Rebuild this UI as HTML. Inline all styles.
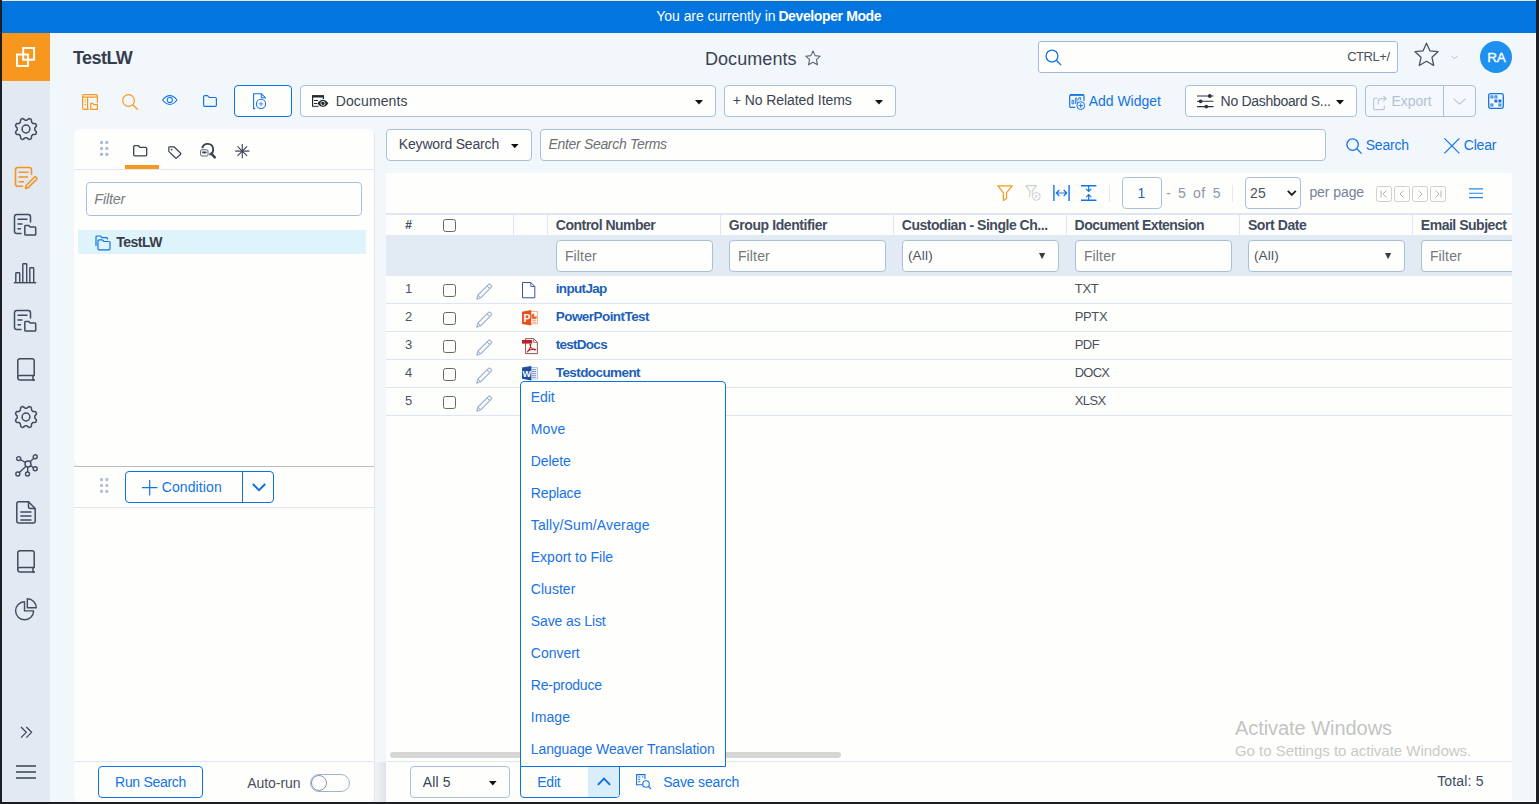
<!DOCTYPE html>
<html lang="en"><head><meta charset="utf-8"><title>Documents - TestLW</title>
<style>
html,body{margin:0;padding:0}
body{width:1539px;height:804px;position:relative;overflow:hidden;background:#1d1e24;font-family:"Liberation Sans",sans-serif}
.b{position:absolute;box-sizing:border-box}
.t{position:absolute;white-space:nowrap;line-height:1;display:block}
svg{overflow:visible}
</style></head><body>
<div class="b" style="left:2px;top:0px;width:1534px;height:1px;background:#efe8dc;"></div>
<div class="b" style="left:2px;top:1px;width:1534px;height:32px;background:#0275de;"></div>
<div class="b" style="left:2px;top:33px;width:48px;height:769px;background:#e2e9f3;"></div>
<div class="b" style="left:50px;top:33px;width:1486px;height:769px;background:#f2f7fb;"></div>
<div class="b" style="left:2px;top:33px;width:48px;height:48px;background:#f8971d;"></div>
<div class="b" style="left:1535px;top:33px;width:1px;height:769px;background:rgba(255,255,255,0.85);"></div>
<div class="b" style="left:1512px;top:801px;width:24px;height:1px;background:rgba(255,255,255,0.9);"></div>
<span class="t" id="banner" style="left:656.30px;top:9.25px;font-size:14px;color:#fff;letter-spacing:-0.046px;">You are currently in</span>
<span class="t" id="banner2" style="left:778.40px;top:9.25px;font-size:14px;color:#fff;letter-spacing:-0.382px;font-weight:700;">Developer Mode</span>
<svg style="position:absolute;left:16px;top:47px" width="22" height="22" viewBox="0 0 22 22" fill="none" ><rect x="7.2" y="1" width="10.9" height="11.7" stroke="#fff" stroke-width="2"/><rect x="1" y="7.5" width="11" height="11.5" stroke="#fff" stroke-width="2"/></svg>
<svg style="position:absolute;left:13.5px;top:116.6px" width="24" height="24" viewBox="0 0 24 24" fill="none" ><path d="M12.0 3.2L12.9 3.2L13.9 2.3L15.2 1.5L16.2 1.8L17.2 2.3L17.5 3.8L17.6 5.2L18.2 5.8L18.8 6.4L20.2 6.5L21.7 6.8L22.2 7.8L22.5 8.8L21.7 10.1L20.8 11.1L20.8 12.0L20.8 12.9L21.7 13.9L22.5 15.2L22.2 16.2L21.7 17.2L20.2 17.5L18.8 17.6L18.2 18.2L17.6 18.8L17.5 20.2L17.2 21.7L16.2 22.2L15.2 22.5L13.9 21.7L12.9 20.8L12.0 20.8L11.1 20.8L10.1 21.7L8.8 22.5L7.8 22.2L6.8 21.7L6.5 20.2L6.4 18.8L5.8 18.2L5.2 17.6L3.8 17.5L2.3 17.2L1.8 16.2L1.5 15.2L2.3 13.9L3.2 12.9L3.2 12.0L3.2 11.1L2.3 10.1L1.5 8.8L1.8 7.8L2.3 6.8L3.8 6.5L5.2 6.4L5.8 5.8L6.4 5.2L6.5 3.8L6.8 2.3L7.8 1.8L8.8 1.5L10.1 2.3L11.1 3.2Z" stroke="#414b5c" stroke-width="1.5" stroke-linejoin="round"/><circle cx="12" cy="12" r="3.9" stroke="#414b5c" stroke-width="1.5"/></svg>
<svg style="position:absolute;left:13.5px;top:165.5px" width="24" height="24" viewBox="0 0 24 24" fill="none" ><path d="M8.5 20.3H3.8Q1.5 20.3 1.5 18V3.8Q1.5 1.5 3.8 1.5H15.2Q17.5 1.5 17.5 3.8V8.5" stroke="#f7931e" stroke-width="1.6" stroke-linecap="round"/><path d="M4.5 6.3H14.5M4.5 11H14M4.5 15.7H10" stroke="#f7931e" stroke-width="1.6"/><path d="M11.5 22.5L12.4 19.2L20.3 11.3Q21.2 10.4 22.3 11.5Q23.4 12.6 22.5 13.5L14.6 21.4Z" stroke="#f7931e" stroke-width="1.6" stroke-linejoin="round"/></svg>
<svg style="position:absolute;left:13px;top:212.5px" width="24" height="24" viewBox="0 0 24 24" fill="none" ><path d="M8 20.5H3.8Q1.5 20.5 1.5 18.2V3.8Q1.5 1.5 3.8 1.5H15.2Q17.5 1.5 17.5 3.8V9" stroke="#414b5c" stroke-width="1.5" stroke-linecap="round"/><path d="M4.5 6.3H14.5M4.5 11H9.5M4.5 15.7H8" stroke="#414b5c" stroke-width="1.5"/><path d="M11.8 21.3V13.2Q11.8 12.4 12.6 12.4H15.6L17.2 14H21.9Q22.7 14 22.7 14.8V21.3Q22.7 22.1 21.9 22.1H12.6Q11.8 22.1 11.8 21.3Z" stroke="#414b5c" stroke-width="1.5" stroke-linejoin="round"/></svg>
<svg style="position:absolute;left:13px;top:261.5px" width="24" height="22" viewBox="0 0 24 22" fill="none" ><path d="M0.8 20.7H23.2" stroke="#414b5c" stroke-width="1.4"/><path d="M2.8 20.5V11.5Q2.8 10.8 3.5 10.8H6Q6.7 10.8 6.7 11.5V20.5M9.8 20.5V2.5Q9.8 1.8 10.5 1.8H13Q13.7 1.8 13.7 2.5V20.5M16.8 20.5V6.5Q16.8 5.8 17.5 5.8H20Q20.7 5.8 20.7 6.5V20.5" stroke="#414b5c" stroke-width="1.4"/></svg>
<svg style="position:absolute;left:13px;top:308.5px" width="24" height="24" viewBox="0 0 24 24" fill="none" ><path d="M8 20.5H3.8Q1.5 20.5 1.5 18.2V3.8Q1.5 1.5 3.8 1.5H15.2Q17.5 1.5 17.5 3.8V9" stroke="#414b5c" stroke-width="1.5" stroke-linecap="round"/><path d="M4.5 6.3H14.5M4.5 11H9.5M4.5 15.7H8" stroke="#414b5c" stroke-width="1.5"/><path d="M11.8 21.3V13.2Q11.8 12.4 12.6 12.4H15.6L17.2 14H21.9Q22.7 14 22.7 14.8V21.3Q22.7 22.1 21.9 22.1H12.6Q11.8 22.1 11.8 21.3Z" stroke="#414b5c" stroke-width="1.5" stroke-linejoin="round"/></svg>
<svg style="position:absolute;left:16.5px;top:357.5px" width="19" height="23" viewBox="0 0 19 23" fill="none" ><path d="M17 22H3.2Q0.8 22 0.8 19.7V3Q0.8 0.8 3 0.8H15Q17.2 0.8 17.2 3V17.5H3Q0.8 17.5 0.8 19.7" stroke="#414b5c" stroke-width="1.5" stroke-linejoin="round"/><path d="M16 17.5V22H18" stroke="#414b5c" stroke-width="1.5"/></svg>
<svg style="position:absolute;left:13.5px;top:404.5px" width="24" height="24" viewBox="0 0 24 24" fill="none" ><path d="M12.0 3.2L12.9 3.2L13.9 2.3L15.2 1.5L16.2 1.8L17.2 2.3L17.5 3.8L17.6 5.2L18.2 5.8L18.8 6.4L20.2 6.5L21.7 6.8L22.2 7.8L22.5 8.8L21.7 10.1L20.8 11.1L20.8 12.0L20.8 12.9L21.7 13.9L22.5 15.2L22.2 16.2L21.7 17.2L20.2 17.5L18.8 17.6L18.2 18.2L17.6 18.8L17.5 20.2L17.2 21.7L16.2 22.2L15.2 22.5L13.9 21.7L12.9 20.8L12.0 20.8L11.1 20.8L10.1 21.7L8.8 22.5L7.8 22.2L6.8 21.7L6.5 20.2L6.4 18.8L5.8 18.2L5.2 17.6L3.8 17.5L2.3 17.2L1.8 16.2L1.5 15.2L2.3 13.9L3.2 12.9L3.2 12.0L3.2 11.1L2.3 10.1L1.5 8.8L1.8 7.8L2.3 6.8L3.8 6.5L5.2 6.4L5.8 5.8L6.4 5.2L6.5 3.8L6.8 2.3L7.8 1.8L8.8 1.5L10.1 2.3L11.1 3.2Z" stroke="#414b5c" stroke-width="1.5" stroke-linejoin="round"/><circle cx="12" cy="12" r="3.9" stroke="#414b5c" stroke-width="1.5"/></svg>
<svg style="position:absolute;left:14.5px;top:453.5px" width="24" height="24" viewBox="0 0 24 24" fill="none" ><circle cx="13" cy="10" r="3" stroke="#414b5c" stroke-width="1.4"/><circle cx="3.7" cy="4.6" r="2" stroke="#414b5c" stroke-width="1.4"/><circle cx="20.2" cy="2.8" r="2" stroke="#414b5c" stroke-width="1.4"/><circle cx="20.2" cy="14.8" r="2" stroke="#414b5c" stroke-width="1.4"/><circle cx="12.5" cy="20" r="2" stroke="#414b5c" stroke-width="1.4"/><circle cx="2.8" cy="20" r="2" stroke="#414b5c" stroke-width="1.4"/><path d="M5.4 5.7L10.4 8.5M18.9 4.3L15 7.8M18.4 13.8L15.7 11.6M12.7 18V13M4.3 18.6L11 12.2" stroke="#414b5c" stroke-width="1.4"/></svg>
<svg style="position:absolute;left:15.5px;top:501px" width="20" height="23" viewBox="0 0 20 23" fill="none" ><path d="M2.8 0.8H12.5L19.2 7.5V20Q19.2 22 17.2 22H2.8Q0.8 22 0.8 20V2.8Q0.8 0.8 2.8 0.8Z" stroke="#414b5c" stroke-width="1.5" stroke-linejoin="round"/><path d="M12.5 0.8V5.5Q12.5 7.5 14.5 7.5H19.2" stroke="#414b5c" stroke-width="1.5"/><path d="M4.3 11H15.5M4.3 15H15.5M4.3 19H15.5" stroke="#414b5c" stroke-width="1.3"/></svg>
<svg style="position:absolute;left:16.5px;top:549.5px" width="19" height="23" viewBox="0 0 19 23" fill="none" ><path d="M17 22H3.2Q0.8 22 0.8 19.7V3Q0.8 0.8 3 0.8H15Q17.2 0.8 17.2 3V17.5H3Q0.8 17.5 0.8 19.7" stroke="#414b5c" stroke-width="1.5" stroke-linejoin="round"/><path d="M16 17.5V22H18" stroke="#414b5c" stroke-width="1.5"/></svg>
<svg style="position:absolute;left:14.5px;top:598px" width="22" height="22.5" viewBox="0 0 22 22.5" fill="none" ><path d="M9.5 3.8A9 9 0 1 0 18.6 12.9H9.5Z" stroke="#414b5c" stroke-width="1.4" stroke-linejoin="round"/><path d="M12.3 0.8A9 9 0 0 1 21.3 9.8H12.3Z" stroke="#414b5c" stroke-width="1.4" stroke-linejoin="round"/></svg>
<svg style="position:absolute;left:20.3px;top:725.6px" width="13" height="13" viewBox="0 0 13 13" fill="none" ><path d="M1 1L6.3 6.3L1 11.6M6.3 1L11.6 6.3L6.3 11.6" stroke="#3a4354" stroke-width="1.2"/></svg>
<svg style="position:absolute;left:16px;top:765px" width="20" height="14" viewBox="0 0 20 14" fill="none" ><path d="M0 1H20M0 7H20M0 13H20" stroke="#3a4354" stroke-width="1.4"/></svg>
<span class="t" id="ws" style="left:72.90px;top:48.66px;font-size:18px;color:#363d4c;letter-spacing:-0.545px;font-weight:700;">TestLW</span>
<span class="t" id="title" style="left:704.90px;top:49.76px;font-size:18px;color:#3a4354;letter-spacing:0.084px;">Documents</span>
<svg style="position:absolute;left:804.5px;top:50px" width="16" height="16" viewBox="0 0 16 16" fill="none" ><path d="M8 0.9L10.1 5.6L15.2 6.2L11.4 9.7L12.5 14.8L8 12.2L3.5 14.8L4.6 9.7L0.8 6.2L5.9 5.6Z" stroke="#5a6475" stroke-width="1.1" stroke-linejoin="round"/></svg>
<div class="b" style="left:1038px;top:41px;width:360px;height:32px;background:#fefffd;border:1px solid #a3b8d6;border-radius:3px;"></div>
<svg style="position:absolute;left:1045px;top:49px" width="17" height="17" viewBox="0 0 17 17" fill="none" ><circle cx="7" cy="7" r="5.9" stroke="#1273e4" stroke-width="1.3"/><path d="M11.3 11.3L16 16" stroke="#1273e4" stroke-width="1.3"/></svg>
<span class="t" id="ctrl" style="left:1347.20px;top:50.20px;font-size:13px;color:#4a4f5c;letter-spacing:-0.459px;">CTRL+/</span>
<svg style="position:absolute;left:1414px;top:42px" width="25" height="25" viewBox="0 0 25 25" fill="none" ><path d="M12.5 1.2L15.9 8.8L24 9.7L18 15.3L19.7 23.5L12.5 19.3L5.3 23.5L7 15.3L1 9.7L9.1 8.8Z" stroke="#4a5262" stroke-width="1.3" stroke-linejoin="round"/></svg>
<svg style="position:absolute;left:1451px;top:55px" width="7" height="5" viewBox="0 0 7 5" fill="none" ><path d="M0.5 0.8L3.5 3.8L6.5 0.8" stroke="#b4bccb" stroke-width="1"/></svg>
<div class="b" style="left:1480px;top:41px;width:32px;height:32px;background:#1e90f0;border-radius:16px;"></div>
<span class="t" id="ra" style="left:1487.20px;top:50.87px;font-size:13.5px;color:#fff;letter-spacing:-0.277px;-webkit-text-stroke:0.35px #fff;">RA</span>
<svg style="position:absolute;left:82px;top:94px" width="16" height="16" viewBox="0 0 16 16" fill="none" ><path d="M15.4 8.9V2.1Q15.4 0.6 13.9 0.6H2.1Q0.6 0.6 0.6 2.1V13.9Q0.6 15.4 2.1 15.4H6.8" stroke="#f8971d" stroke-width="1.2"/><path d="M0.6 3.1H15.4M5.6 3.1V15.4" stroke="#f8971d" stroke-width="1.2"/><path d="M3.2 5.2V12.4" stroke="#f8971d" stroke-width="1.1" stroke-dasharray="1.2 1.2"/><path d="M8.7 15.4V9.4H10.8L11.9 10.6H15.4V15.4Z" stroke="#f8971d" stroke-width="1.2" stroke-linejoin="round"/></svg>
<svg style="position:absolute;left:121.8px;top:94.2px" width="17" height="17" viewBox="0 0 17 17" fill="none" ><circle cx="6.55" cy="6.55" r="5.85" stroke="#f8971d" stroke-width="1.2"/><path d="M10.8 10.8L15.9 15.7" stroke="#f8971d" stroke-width="1.2"/></svg>
<svg style="position:absolute;left:161.8px;top:94.7px" width="16" height="11" viewBox="0 0 16 11" fill="none" ><path d="M0.6 5Q4 0.6 7.8 0.6Q11.6 0.6 15 5Q11.6 9.4 7.8 9.4Q4 9.4 0.6 5Z" stroke="#1273e4" stroke-width="1.05" stroke-linejoin="round"/><circle cx="7.8" cy="5" r="2.6" stroke="#1273e4" stroke-width="1.05"/></svg>
<svg style="position:absolute;left:203px;top:95px" width="14" height="12" viewBox="0 0 14 12" fill="none" ><path d="M0.6 10.2V1.8Q0.6 0.6 1.8 0.6H4.6L6.2 2.5H12.2Q13.4 2.5 13.4 3.7V10.2Q13.4 11.4 12.2 11.4H1.8Q0.6 11.4 0.6 10.2Z" stroke="#1273e4" stroke-width="1.15" stroke-linejoin="round"/></svg>
<div class="b" style="left:234px;top:85px;width:58px;height:32px;background:#fefffd;border:1px solid #0b73e0;border-radius:4px;"></div>
<svg style="position:absolute;left:253px;top:93px" width="14" height="17" viewBox="0 0 14 17" fill="none" ><path d="M2.2 15.6H0.6V0.7H8.3L12.7 4.9" stroke="#1273e4" stroke-width="1.1"/><path d="M8.3 0.7V4.9H12.7" stroke="#1273e4" stroke-width="1"/><circle cx="8" cy="10.9" r="4.6" stroke="#1273e4" stroke-width="1.1"/><path d="M8 8.6V13.2M5.7 10.9H10.3" stroke="#1273e4" stroke-width="0.9" opacity="0.8"/></svg>
<div class="b" style="left:300px;top:85px;width:416px;height:32px;background:#fefffd;border:1px solid #a9c0dc;border-radius:4px;"></div>
<svg style="position:absolute;left:312px;top:95px" width="17" height="13" viewBox="0 0 17 13" fill="none" ><path d="M0 1.3H12" stroke="#22262e" stroke-width="2.4"/><path d="M0.6 1V11.6M11.4 1V4" stroke="#22262e" stroke-width="1.2"/><path d="M0 11.4H6.5" stroke="#55585f" stroke-width="1.4"/><path d="M2 5.5H6M2 8.5H5" stroke="#22262e" stroke-width="1"/><path d="M5.4 8.4Q8 4.8 10.9 4.8Q13.8 4.8 16.4 8.4Q13.8 12 10.9 12Q8 12 5.4 8.4Z" fill="#22262e"/><circle cx="10.9" cy="8.4" r="2.1" stroke="#fff" stroke-width="0.8" fill="#22262e"/></svg>
<span class="t" id="dd1" style="left:335.70px;top:93.85px;font-size:14px;color:#3a4354;letter-spacing:0.132px;">Documents</span>
<svg style="position:absolute;left:695px;top:99.8px" width="8" height="5" viewBox="0 0 8 5" fill="none" ><path d="M0 0H8L4 4.6Z" fill="#111"/></svg>
<div class="b" style="left:724px;top:85px;width:172px;height:32px;background:#fefffd;border:1px solid #a9c0dc;border-radius:4px;"></div>
<span class="t" id="rel" style="left:732.70px;top:93.15px;font-size:14px;color:#3a4354;letter-spacing:-0.063px;">+ No Related Items</span>
<svg style="position:absolute;left:875px;top:99.8px" width="8" height="5" viewBox="0 0 8 5" fill="none" ><path d="M0 0H8L4 4.6Z" fill="#111"/></svg>
<svg style="position:absolute;left:1068.5px;top:94px" width="17" height="17" viewBox="0 0 17 17" fill="none" ><path d="M6.2 13.4H1.8Q0.7 13.4 0.7 12.3V1.9Q0.7 0.8 1.8 0.8H13.9Q15 0.8 15 1.9V7" stroke="#1273e4" stroke-width="1.2"/><path d="M1 0.9H14.7" stroke="#1273e4" stroke-width="1.6"/><path d="M3 9.8V6.4H4.6V9.8ZM6.4 9.8V4.2H8V9.8" stroke="#1273e4" stroke-width="0.85"/><path d="M9.8 6.4V3.6H11.6V6.2" stroke="#1273e4" stroke-width="0.85"/><circle cx="11.8" cy="11.6" r="3.9" fill="#f2f7fb" stroke="#1273e4" stroke-width="1"/><path d="M11.8 9.3V13.9M9.5 11.6H14.1" stroke="#1273e4" stroke-width="1"/></svg>
<span class="t" id="addw" style="left:1088.80px;top:94.15px;font-size:14px;color:#1273e4;letter-spacing:-0.038px;">Add Widget</span>
<div class="b" style="left:1185px;top:85px;width:172px;height:32px;background:#fefffd;border:1px solid #a9c0dc;border-radius:4px;"></div>
<svg style="position:absolute;left:1197px;top:94px" width="17" height="15" viewBox="0 0 17 15" fill="none" ><path d="M0 2H16.5M0 7.3H16.5M0 12.6H16.5" stroke="#2d3340" stroke-width="1.1"/><circle cx="12.8" cy="2" r="1.9" fill="#2d3340"/><circle cx="3.6" cy="7.3" r="1.9" fill="#2d3340"/><circle cx="9.3" cy="12.6" r="1.9" fill="#2d3340"/></svg>
<span class="t" id="dash" style="left:1220.60px;top:94.15px;font-size:14px;color:#3a4354;letter-spacing:-0.305px;">No Dashboard S...</span>
<svg style="position:absolute;left:1336px;top:99.8px" width="8" height="5" viewBox="0 0 8 5" fill="none" ><path d="M0 0H8L4 4.6Z" fill="#111"/></svg>
<div class="b" style="left:1365px;top:85px;width:111px;height:32px;background:#f5f8fc;border:1px solid #a9c0dc;border-radius:4px;"></div>
<div class="b" style="left:1443px;top:85px;width:1px;height:32px;background:#a9c0dc;"></div>
<svg style="position:absolute;left:1372.5px;top:94.5px" width="14" height="15.5" viewBox="0 0 14 15.5" fill="none" ><path d="M5 3.2H1.7Q0.7 3.2 0.7 4.2V13.6Q0.7 14.6 1.7 14.6H10.3Q11.3 14.6 11.3 13.6V10.5" stroke="#b9c6dc" stroke-width="1.1"/><path d="M5.2 9.5V7.3Q5.2 3.6 9 3.6H13" stroke="#b9c6dc" stroke-width="1.1"/><path d="M10.3 0.8L13.2 3.6L10.3 6.4" stroke="#b9c6dc" stroke-width="1.1"/></svg>
<span class="t" id="exp" style="left:1391.40px;top:94.15px;font-size:14px;color:#b4c1d8;letter-spacing:-0.027px;">Export</span>
<svg style="position:absolute;left:1453px;top:98px" width="13" height="7" viewBox="0 0 13 7" fill="none" ><path d="M0.5 0.6L6.5 6.2L12.5 0.6" stroke="#b9c6dc" stroke-width="1.1"/></svg>
<svg style="position:absolute;left:1488px;top:93px" width="16" height="16" viewBox="0 0 16 16" fill="none" ><rect x="0.7" y="0.7" width="14.6" height="14.6" rx="1.8" stroke="#1273e4" stroke-width="1.3"/><rect x="2.9" y="2.9" width="2" height="2" stroke="#1273e4" stroke-width="0.9"/><rect x="6.9" y="2.9" width="2" height="2" stroke="#1273e4" stroke-width="0.9"/><rect x="6.9" y="7" width="2" height="2" fill="#1273e4" stroke="#1273e4" stroke-width="0.9"/><rect x="10.9" y="7" width="2" height="2" fill="#1273e4" stroke="#1273e4" stroke-width="0.9"/><rect x="2.9" y="11" width="2" height="2" stroke="#1273e4" stroke-width="0.9"/><rect x="10.9" y="11" width="2" height="2" stroke="#1273e4" stroke-width="0.9"/></svg>
<div class="b" style="left:74px;top:129px;width:300px;height:337px;background:#fefffd;border-radius:8px 8px 0 8px;"></div>
<div class="b" style="left:74px;top:466px;width:300px;height:1px;background:#bdbdbd;"></div>
<div class="b" style="left:74px;top:467px;width:300px;height:335px;background:#fefffd;border-radius:0 0 7px 7px;"></div>
<div class="b" style="left:74px;top:169px;width:300px;height:1px;background:#dfe6f2;"></div>
<div class="b" style="left:74px;top:507px;width:300px;height:1px;background:#dfe6f2;"></div>
<div class="b" style="left:74px;top:761px;width:300px;height:1px;background:#dfe6f2;"></div>
<div class="b" style="left:374px;top:133px;width:1px;height:669px;background:#e2e6eb;"></div>
<div class="b" style="left:375px;top:762px;width:11px;height:40px;background:linear-gradient(to right,#f0f4f8,#dde3ea);"></div>
<svg style="position:absolute;left:99.6px;top:141px" width="9" height="15" viewBox="0 0 9 15" fill="none" ><rect x="0" y="0" width="3.1" height="3.1" rx="1.1" fill="#a9bbd6"/><rect x="5.3" y="0" width="3.1" height="3.1" rx="1.1" fill="#a9bbd6"/><rect x="0" y="5.9" width="3.1" height="3.1" rx="1.1" fill="#a9bbd6"/><rect x="5.3" y="5.9" width="3.1" height="3.1" rx="1.1" fill="#a9bbd6"/><rect x="0" y="11.8" width="3.1" height="3.1" rx="1.1" fill="#a9bbd6"/><rect x="5.3" y="11.8" width="3.1" height="3.1" rx="1.1" fill="#a9bbd6"/></svg>
<svg style="position:absolute;left:132.5px;top:144.6px" width="15" height="12" viewBox="0 0 15 12" fill="none" ><path d="M0.7 9.8V1.8Q0.7 0.7 1.8 0.7H5.4L6.9 2.3H12.6Q13.7 2.3 13.7 3.4V9.8Q13.7 10.9 12.6 10.9H1.8Q0.7 10.9 0.7 9.8Z" stroke="#3b4250" stroke-width="1.3" stroke-linejoin="round"/></svg>
<svg style="position:absolute;left:168.2px;top:145.5px" width="14" height="13" viewBox="0 0 14 13" fill="none" ><path d="M0.8 1.5Q0.8 0.8 1.5 0.8H6L12.6 7.2Q13.1 7.8 12.6 8.3L8.6 12Q8 12.5 7.5 12L0.8 5.3Z" stroke="#3b4250" stroke-width="1.2" stroke-linejoin="round"/><circle cx="3.6" cy="3.6" r="0.9" fill="#3b4250"/></svg>
<svg style="position:absolute;left:200px;top:143px" width="16" height="15.5" viewBox="0 0 16 15.5" fill="none" ><path d="M2.3 5.2A5.5 5.5 0 1 1 9.3 11.6" stroke="#3b4250" stroke-width="1.9"/><path d="M11.3 10.6L14.8 14.3" stroke="#3b4250" stroke-width="2.5" stroke-linecap="round"/><rect x="0.6" y="6.8" width="7.4" height="6.2" rx="1.2" stroke="#5b6372" stroke-width="1"/><path d="M2.2 8.6H6.6V10.2H5L4.4 10.9L3.8 10.2H2.2Z" fill="#3b4250"/></svg>
<svg style="position:absolute;left:234.5px;top:144px" width="15" height="14.2" viewBox="0 0 15 14.2" fill="none" ><path d="M7.3 0V14.2" stroke="#3b4250" stroke-width="1.1"/><path d="M0.2 7.1H14.5" stroke="#6d7686" stroke-width="1.7"/><path d="M2.5 2.3L12.1 11.9M12.1 2.3L2.5 11.9" stroke="#3b4250" stroke-width="1.1"/></svg>
<div class="b" style="left:125px;top:165px;width:34px;height:4px;background:#f8971d;"></div>
<div class="b" style="left:86px;top:182px;width:276px;height:34px;background:#fefffd;border:1px solid #a9c0dc;border-radius:4px;"></div>
<span class="t" id="lf" style="left:94.30px;top:191.73px;font-size:14.5px;color:#7b7d80;letter-spacing:-0.220px;font-style:italic;">Filter</span>
<div class="b" style="left:78px;top:230px;width:288px;height:24px;background:#dff3fa;"></div>
<svg style="position:absolute;left:95px;top:235px" width="16" height="16" viewBox="0 0 16 16" fill="none" ><path d="M1 11V2Q1 1 2 1H5.5L7 2.6H11.5Q12.5 2.6 12.5 3.6V4.4" stroke="#1273e4" stroke-width="1.2"/><path d="M3 13.8V5.9Q3 4.9 4 4.9H7.4L8.9 6.5H14Q15 6.5 15 7.5V13.8Q15 14.8 14 14.8H4Q3 14.8 3 13.8Z" stroke="#1273e4" stroke-width="1.2" stroke-linejoin="round"/></svg>
<span class="t" id="tree" style="left:116.20px;top:235.05px;font-size:14px;color:#363d4c;letter-spacing:-0.508px;font-weight:700;">TestLW</span>
<svg style="position:absolute;left:99.8px;top:478px" width="9" height="15" viewBox="0 0 9 15" fill="none" ><rect x="0" y="0" width="3.1" height="3.1" rx="1.1" fill="#b4bfd3"/><rect x="5.3" y="0" width="3.1" height="3.1" rx="1.1" fill="#b4bfd3"/><rect x="0" y="5.9" width="3.1" height="3.1" rx="1.1" fill="#b4bfd3"/><rect x="5.3" y="5.9" width="3.1" height="3.1" rx="1.1" fill="#b4bfd3"/><rect x="0" y="11.8" width="3.1" height="3.1" rx="1.1" fill="#b4bfd3"/><rect x="5.3" y="11.8" width="3.1" height="3.1" rx="1.1" fill="#b4bfd3"/></svg>
<div class="b" style="left:125px;top:471px;width:149px;height:32px;background:#fefffd;border:1px solid #0b73e0;border-radius:4px;"></div>
<div class="b" style="left:242px;top:471px;width:1px;height:32px;background:#0b73e0;"></div>
<svg style="position:absolute;left:142px;top:480px" width="16" height="16" viewBox="0 0 16 16" fill="none" ><path d="M7.7 0V15.4M0 7.7H15.4" stroke="#1273e4" stroke-width="1.2"/></svg>
<span class="t" id="cond" style="left:161.70px;top:480.15px;font-size:14px;color:#1273e4;letter-spacing:0.116px;">Condition</span>
<svg style="position:absolute;left:252px;top:483px" width="14" height="9" viewBox="0 0 14 9" fill="none" ><path d="M0.8 1L7 7.2L13.2 1" stroke="#0b6fe0" stroke-width="1.9"/></svg>
<div class="b" style="left:98px;top:766px;width:105px;height:32px;background:#fefffd;border:1px solid #0b73e0;border-radius:4px;"></div>
<span class="t" id="run" style="left:115.10px;top:775.15px;font-size:14px;color:#1273e4;letter-spacing:-0.314px;">Run Search</span>
<span class="t" id="auto" style="left:247.20px;top:775.75px;font-size:14px;color:#4a4f5c;letter-spacing:-0.038px;">Auto-run</span>
<div class="b" style="left:310px;top:774px;width:40px;height:18px;background:#fefffd;border:1px solid #9db3d6;border-radius:9px;"></div>
<div class="b" style="left:311px;top:775px;width:16px;height:16px;background:#fefffd;border:1px solid #8d98ab;border-radius:8px;"></div>
<div class="b" style="left:386px;top:129px;width:146px;height:32px;background:#fefffd;border:1px solid #a9c0dc;border-radius:4px;"></div>
<span class="t" id="kw" style="left:398.80px;top:136.85px;font-size:14px;color:#3a4354;letter-spacing:-0.180px;">Keyword Search</span>
<svg style="position:absolute;left:511.3px;top:144.2px" width="7.6" height="4.4" viewBox="0 0 7.6 4.4" fill="none" ><path d="M0 0H7.6L3.8 4.2Z" fill="#111"/></svg>
<div class="b" style="left:540px;top:129px;width:786px;height:32px;background:#fefffd;border:1px solid #a9c0dc;border-radius:4px;"></div>
<span class="t" id="est" style="left:548.40px;top:136.85px;font-size:14px;color:#6e7074;letter-spacing:-0.310px;font-style:italic;">Enter Search Terms</span>
<svg style="position:absolute;left:1345.5px;top:137.8px" width="17" height="17" viewBox="0 0 17 17" fill="none" ><circle cx="6.6" cy="6.6" r="5.7" stroke="#1273e4" stroke-width="1.3"/><path d="M10.8 10.8L15.6 15.6" stroke="#1273e4" stroke-width="1.3"/></svg>
<span class="t" id="srch" style="left:1365.70px;top:138.15px;font-size:14px;color:#1273e4;letter-spacing:-0.194px;">Search</span>
<svg style="position:absolute;left:1444px;top:137.9px" width="16" height="16" viewBox="0 0 16 16" fill="none" ><path d="M0.4 0.4L15.4 15.4M15.4 0.4L0.4 15.4" stroke="#1273e4" stroke-width="1.2"/></svg>
<span class="t" id="clr" style="left:1463.70px;top:138.15px;font-size:14px;color:#1273e4;letter-spacing:-0.152px;">Clear</span>
<div class="b" style="left:386px;top:173px;width:1126px;height:629px;background:#fefffd;"></div>
<svg style="position:absolute;left:996.5px;top:184.5px" width="16" height="16.5" viewBox="0 0 16 16.5" fill="none" ><path d="M0.8 0.8H15.2L9.6 7.6V13.2L6.4 15.4V7.6Z" stroke="#f8971d" stroke-width="1.2" stroke-linejoin="round"/></svg>
<svg style="position:absolute;left:1025px;top:185px" width="16" height="16" viewBox="0 0 16 16" fill="none" ><path d="M0.6 0.6H11.4L7.2 5.8V9.2M4.8 12V5.8L0.6 0.6" stroke="#c9cdd3" stroke-width="1.1" stroke-linejoin="round"/><circle cx="11.3" cy="11.4" r="3.9" stroke="#c9cdd3" stroke-width="1"/><path d="M9.6 9.7L13 13.1M13 9.7L9.6 13.1" stroke="#c9cdd3" stroke-width="0.9"/></svg>
<svg style="position:absolute;left:1052.5px;top:185px" width="17" height="16" viewBox="0 0 17 16" fill="none" ><path d="M0.9 0V16M16.1 0V16" stroke="#1273e4" stroke-width="1.4"/><path d="M3.4 8H13.6M6.3 5L3.3 8L6.3 11M10.7 5L13.7 8L10.7 11" stroke="#1273e4" stroke-width="1.2"/></svg>
<svg style="position:absolute;left:1081px;top:185px" width="16" height="16" viewBox="0 0 16 16" fill="none" ><path d="M0 0.8H15.4M0 15.2H15.4" stroke="#1273e4" stroke-width="1.4"/><path d="M7.7 0.8V6.2M5.2 3.8L7.7 6.3L10.2 3.8M7.7 15.2V9.8M5.2 12.2L7.7 9.7L10.2 12.2" stroke="#1273e4" stroke-width="1.2"/></svg>
<div class="b" style="left:1109px;top:185px;width:1px;height:17px;background:#e3e8f1;"></div>
<div class="b" style="left:1122px;top:177px;width:40px;height:32px;background:#fefffd;border:1px solid #a9c0dc;border-radius:4px;"></div>
<span class="t" id="pg1" style="left:1137.60px;top:185.65px;font-size:14px;color:#2d5fb5;letter-spacing:-1.487px;">1</span>
<span class="t" style="left:1166.30px;top:185.65px;font-size:14px;color:#8b96ab;letter-spacing:-0.062px;">-</span>
<span class="t" style="left:1177.90px;top:185.65px;font-size:14px;color:#8b96ab;letter-spacing:0.213px;">5</span>
<span class="t" style="left:1192.90px;top:185.65px;font-size:14px;color:#8b96ab;letter-spacing:0.661px;">of</span>
<span class="t" id="of5" style="left:1212.70px;top:185.65px;font-size:14px;color:#8b96ab;letter-spacing:0.213px;">5</span>
<div class="b" style="left:1232px;top:185px;width:1px;height:17px;background:#e3e8f1;"></div>
<div class="b" style="left:1245px;top:177px;width:56px;height:32px;background:#fefffd;border:1px solid #a9c0dc;border-radius:4px;"></div>
<span class="t" id="n25" style="left:1250.10px;top:185.65px;font-size:14px;color:#4a5262;letter-spacing:0.063px;">25</span>
<svg style="position:absolute;left:1286.5px;top:189.5px" width="10" height="7" viewBox="0 0 10 7" fill="none" ><path d="M0.8 0.9L4.8 4.9L8.8 0.9" stroke="#222" stroke-width="1.9"/></svg>
<span class="t" id="pp" style="left:1309.40px;top:184.65px;font-size:14px;color:#76819a;letter-spacing:-0.072px;">per page</span>
<svg style="position:absolute;left:1376.3px;top:186px" width="16" height="16" viewBox="0 0 16 16" fill="none" ><rect x="0.5" y="0.5" width="15" height="15" rx="2" stroke="#d0d0cc" stroke-width="1"/><g stroke="#ababab" stroke-width="0.9"><path d="M5 4.5V11.5M10.5 4.5L7 8L10.5 11.5"/></g></svg>
<svg style="position:absolute;left:1394.3px;top:186px" width="16" height="16" viewBox="0 0 16 16" fill="none" ><rect x="0.5" y="0.5" width="15" height="15" rx="2" stroke="#d0d0cc" stroke-width="1"/><g stroke="#ababab" stroke-width="0.9"><path d="M9.5 4.5L6 8L9.5 11.5"/></g></svg>
<svg style="position:absolute;left:1412.3px;top:186px" width="16" height="16" viewBox="0 0 16 16" fill="none" ><rect x="0.5" y="0.5" width="15" height="15" rx="2" stroke="#d0d0cc" stroke-width="1"/><g stroke="#ababab" stroke-width="0.9"><path d="M6.5 4.5L10 8L6.5 11.5"/></g></svg>
<svg style="position:absolute;left:1430.3px;top:186px" width="16" height="16" viewBox="0 0 16 16" fill="none" ><rect x="0.5" y="0.5" width="15" height="15" rx="2" stroke="#d0d0cc" stroke-width="1"/><g stroke="#ababab" stroke-width="0.9"><path d="M11 4.5V11.5M5.5 4.5L9 8L5.5 11.5"/></g></svg>
<svg style="position:absolute;left:1469px;top:188.4px" width="14" height="11" viewBox="0 0 14 11" fill="none" ><path d="M0 0.8H14M0 5.2H14M0 9.6H14" stroke="#2584ee" stroke-width="1.15"/></svg>
<div class="b" style="left:386px;top:213px;width:1126px;height:2px;background:#dfe6f3;"></div>
<div class="b" style="left:386px;top:235px;width:1126px;height:41px;background:#e2eaf4;"></div>
<div class="b" style="left:513px;top:215px;width:1px;height:20px;background:#dfe6f3;"></div>
<div class="b" style="left:547px;top:215px;width:1px;height:20px;background:#dfe6f3;"></div>
<div class="b" style="left:720px;top:215px;width:1px;height:20px;background:#dfe6f3;"></div>
<div class="b" style="left:893px;top:215px;width:1px;height:20px;background:#dfe6f3;"></div>
<div class="b" style="left:1066px;top:215px;width:1px;height:20px;background:#dfe6f3;"></div>
<div class="b" style="left:1239px;top:215px;width:1px;height:20px;background:#dfe6f3;"></div>
<div class="b" style="left:1412px;top:215px;width:1px;height:20px;background:#dfe6f3;"></div>
<span class="t" style="left:405.20px;top:219.44px;font-size:12px;color:#424c5f;letter-spacing:-0.274px;font-weight:700;">#</span>
<span class="t" id="h1" style="left:555.80px;top:218.15px;font-size:14px;color:#424c5f;letter-spacing:-0.505px;font-weight:700;">Control Number</span>
<span class="t" id="h2" style="left:728.80px;top:218.15px;font-size:14px;color:#424c5f;letter-spacing:-0.420px;font-weight:700;">Group Identifier</span>
<span class="t" id="h3" style="left:901.80px;top:218.15px;font-size:14px;color:#424c5f;letter-spacing:-0.472px;font-weight:700;">Custodian - Single Ch...</span>
<span class="t" id="h4" style="left:1074.60px;top:218.15px;font-size:14px;color:#424c5f;letter-spacing:-0.553px;font-weight:700;">Document Extension</span>
<span class="t" id="h5" style="left:1247.90px;top:218.15px;font-size:14px;color:#424c5f;letter-spacing:-0.416px;font-weight:700;">Sort Date</span>
<span class="t" id="h6" style="left:1420.80px;top:218.15px;font-size:14px;color:#424c5f;letter-spacing:-0.478px;font-weight:700;">Email Subject</span>
<div class="b" style="left:443px;top:219px;width:13px;height:13px;background:#fefffd;border:1px solid #686868;border-radius:2.5px;"></div>
<div class="b" style="left:556px;top:240px;width:157px;height:32px;background:#fefffd;border:1px solid #a9c0dc;border-radius:4px;"></div>
<span class="t" style="left:564.90px;top:249.15px;font-size:14px;color:#76777a;letter-spacing:0.147px;">Filter</span>
<div class="b" style="left:729px;top:240px;width:157px;height:32px;background:#fefffd;border:1px solid #a9c0dc;border-radius:4px;"></div>
<span class="t" style="left:737.90px;top:249.15px;font-size:14px;color:#76777a;letter-spacing:0.147px;">Filter</span>
<div class="b" style="left:902px;top:240px;width:157px;height:32px;background:#fefffd;border:1px solid #a9c0dc;border-radius:4px;"></div>
<span class="t" style="left:907.90px;top:248.57px;font-size:13.5px;color:#4a5262;letter-spacing:0.201px;">(All)</span>
<svg style="position:absolute;left:1039.3px;top:252.8px" width="7" height="7" viewBox="0 0 7 7" fill="none" ><path d="M0 0H6.2L3.1 6.2Z" fill="#3a3d44"/></svg>
<div class="b" style="left:1075px;top:240px;width:157px;height:32px;background:#fefffd;border:1px solid #a9c0dc;border-radius:4px;"></div>
<span class="t" style="left:1083.90px;top:249.15px;font-size:14px;color:#76777a;letter-spacing:0.147px;">Filter</span>
<div class="b" style="left:1248px;top:240px;width:157px;height:32px;background:#fefffd;border:1px solid #a9c0dc;border-radius:4px;"></div>
<span class="t" style="left:1253.90px;top:248.57px;font-size:13.5px;color:#4a5262;letter-spacing:0.201px;">(All)</span>
<svg style="position:absolute;left:1385.3px;top:252.8px" width="7" height="7" viewBox="0 0 7 7" fill="none" ><path d="M0 0H6.2L3.1 6.2Z" fill="#3a3d44"/></svg>
<div class="b" style="left:1421px;top:240px;width:91px;height:32px;background:#fefffd;border:1px solid #a9c0dc;border-radius:4px;border-right:none;border-radius:4px 0 0 4px;"></div>
<span class="t" style="left:1429.90px;top:249.15px;font-size:14px;color:#76777a;letter-spacing:0.147px;">Filter</span>
<div class="b" style="left:386px;top:303px;width:1126px;height:1px;background:#dde5f3;"></div>
<span class="t" style="left:405.00px;top:282.00px;font-size:13px;color:#4a5262;letter-spacing:-0.530px;">1</span>
<div class="b" style="left:443px;top:284px;width:13px;height:13px;background:#fefffd;border:1px solid #686868;border-radius:2.5px;"></div>
<svg style="position:absolute;left:475.6px;top:282.6px" width="17" height="17" viewBox="0 0 16 16" fill="none" ><path d="M0.8 15.2L1.8 11.3L11.6 1.5Q12.6 0.5 13.9 1.8Q15.2 3.1 14.2 4.1L4.4 13.9Z" stroke="#a2b2cd" stroke-width="1.1" stroke-linejoin="round"/><path d="M10.4 2.7L13 5.3M1.8 11.3L4.4 13.9" stroke="#a2b2cd" stroke-width="1"/></svg>
<span class="t" id="n0" style="left:555.80px;top:281.57px;font-size:13.5px;color:#1d60b8;letter-spacing:-0.681px;font-weight:700;">inputJap</span>
<span class="t" id="e0" style="left:1074.70px;top:282.00px;font-size:13px;color:#4a4f5c;letter-spacing:-0.218px;">TXT</span>
<div class="b" style="left:386px;top:331px;width:1126px;height:1px;background:#dde5f3;"></div>
<span class="t" style="left:405.00px;top:310.00px;font-size:13px;color:#4a5262;letter-spacing:-0.530px;">2</span>
<div class="b" style="left:443px;top:312px;width:13px;height:13px;background:#fefffd;border:1px solid #686868;border-radius:2.5px;"></div>
<svg style="position:absolute;left:475.6px;top:310.6px" width="17" height="17" viewBox="0 0 16 16" fill="none" ><path d="M0.8 15.2L1.8 11.3L11.6 1.5Q12.6 0.5 13.9 1.8Q15.2 3.1 14.2 4.1L4.4 13.9Z" stroke="#a2b2cd" stroke-width="1.1" stroke-linejoin="round"/><path d="M10.4 2.7L13 5.3M1.8 11.3L4.4 13.9" stroke="#a2b2cd" stroke-width="1"/></svg>
<span class="t" id="n1" style="left:555.80px;top:309.57px;font-size:13.5px;color:#1d60b8;letter-spacing:-0.558px;font-weight:700;">PowerPointTest</span>
<span class="t" id="e1" style="left:1074.70px;top:310.00px;font-size:13px;color:#4a4f5c;letter-spacing:-0.339px;">PPTX</span>
<div class="b" style="left:386px;top:359px;width:1126px;height:1px;background:#dde5f3;"></div>
<span class="t" style="left:405.00px;top:338.00px;font-size:13px;color:#4a5262;letter-spacing:-0.530px;">3</span>
<div class="b" style="left:443px;top:340px;width:13px;height:13px;background:#fefffd;border:1px solid #686868;border-radius:2.5px;"></div>
<svg style="position:absolute;left:475.6px;top:338.6px" width="17" height="17" viewBox="0 0 16 16" fill="none" ><path d="M0.8 15.2L1.8 11.3L11.6 1.5Q12.6 0.5 13.9 1.8Q15.2 3.1 14.2 4.1L4.4 13.9Z" stroke="#a2b2cd" stroke-width="1.1" stroke-linejoin="round"/><path d="M10.4 2.7L13 5.3M1.8 11.3L4.4 13.9" stroke="#a2b2cd" stroke-width="1"/></svg>
<span class="t" id="n2" style="left:555.80px;top:337.57px;font-size:13.5px;color:#1d60b8;letter-spacing:-0.740px;font-weight:700;">testDocs</span>
<span class="t" id="e2" style="left:1074.70px;top:338.00px;font-size:13px;color:#4a4f5c;letter-spacing:-0.534px;">PDF</span>
<div class="b" style="left:386px;top:387px;width:1126px;height:1px;background:#dde5f3;"></div>
<span class="t" style="left:405.00px;top:366.00px;font-size:13px;color:#4a5262;letter-spacing:-0.530px;">4</span>
<div class="b" style="left:443px;top:368px;width:13px;height:13px;background:#fefffd;border:1px solid #686868;border-radius:2.5px;"></div>
<svg style="position:absolute;left:475.6px;top:366.6px" width="17" height="17" viewBox="0 0 16 16" fill="none" ><path d="M0.8 15.2L1.8 11.3L11.6 1.5Q12.6 0.5 13.9 1.8Q15.2 3.1 14.2 4.1L4.4 13.9Z" stroke="#a2b2cd" stroke-width="1.1" stroke-linejoin="round"/><path d="M10.4 2.7L13 5.3M1.8 11.3L4.4 13.9" stroke="#a2b2cd" stroke-width="1"/></svg>
<span class="t" id="n3" style="left:555.80px;top:365.57px;font-size:13.5px;color:#1d60b8;letter-spacing:-0.588px;font-weight:700;">Testdocument</span>
<span class="t" id="e3" style="left:1074.70px;top:366.00px;font-size:13px;color:#4a4f5c;letter-spacing:-0.765px;">DOCX</span>
<div class="b" style="left:386px;top:415px;width:1126px;height:1px;background:#dde5f3;"></div>
<span class="t" style="left:405.00px;top:394.00px;font-size:13px;color:#4a5262;letter-spacing:-0.530px;">5</span>
<div class="b" style="left:443px;top:396px;width:13px;height:13px;background:#fefffd;border:1px solid #686868;border-radius:2.5px;"></div>
<svg style="position:absolute;left:475.6px;top:394.6px" width="17" height="17" viewBox="0 0 16 16" fill="none" ><path d="M0.8 15.2L1.8 11.3L11.6 1.5Q12.6 0.5 13.9 1.8Q15.2 3.1 14.2 4.1L4.4 13.9Z" stroke="#a2b2cd" stroke-width="1.1" stroke-linejoin="round"/><path d="M10.4 2.7L13 5.3M1.8 11.3L4.4 13.9" stroke="#a2b2cd" stroke-width="1"/></svg>
<span class="t" id="e4" style="left:1074.70px;top:394.00px;font-size:13px;color:#4a4f5c;letter-spacing:-0.562px;">XLSX</span>
<svg style="position:absolute;left:522px;top:282px" width="14" height="17" viewBox="0 0 14 17" fill="none" ><path d="M0.5 0.5H8.8L12.8 4.5V15.8H0.5Z" stroke="#3b4fa0" stroke-width="1" stroke-linejoin="round"/><path d="M8.8 0.5V4.5H12.8" stroke="#3b4fa0" stroke-width="0.9"/></svg>
<svg style="position:absolute;left:522px;top:310px" width="16" height="16" viewBox="0 0 16 16" fill="none" ><path d="M7.5 1.4H15.4V13.8H7.5" stroke="#f3a27c" stroke-width="0.9" fill="#fff"/><path d="M12.2 3.4A2.9 2.9 0 1 0 15 6.4H12.2Z" fill="#ee6a38"/><path d="M10.2 10.6H14M10.2 12.2H14" stroke="#f0916a" stroke-width="0.8"/><path d="M0 1.7L9.2 0V15.6L0 13.9Z" fill="#ea4f17"/><text x="1.6" y="11.8" font-family="Liberation Sans, sans-serif" font-size="10.5" font-weight="700" fill="#fff">P</text></svg>
<svg style="position:absolute;left:522px;top:338px" width="16" height="16.5" viewBox="0 0 16 16.5" fill="none" ><path d="M3.6 0.6H11.6L15.4 4.4V15.6H3.6Z" fill="#fff" stroke="#8e3a3a" stroke-width="0.9"/><path d="M11.6 0.6V4.4H15.4" stroke="#9a5555" stroke-width="0.8"/><rect x="0" y="2" width="10.2" height="3.6" fill="#b3232a"/><path d="M5.8 13.6Q8.4 10.4 8.8 6.9Q8.5 6 7.9 6.6Q8.1 9 10.6 11.1Q13.4 10.7 13.8 11.7Q13 12.5 10.6 11.3Q7.8 11.8 5.9 13.1Q5 14.4 5.8 13.6Z" stroke="#c1272d" stroke-width="1.1" fill="none"/></svg>
<svg style="position:absolute;left:522px;top:366px" width="16" height="15.5" viewBox="0 0 16 15.5" fill="none" ><path d="M8 1.6H15.6V12.9H8" stroke="#a9bbd9" stroke-width="0.9" fill="#fff"/><path d="M10 3.6H14.3M10 5.5H14.3M10 7.4H14.3M10 9.3H14.3M10 11.2H14.3" stroke="#5f86c4" stroke-width="0.9"/><path d="M0 1.6L9.4 0V14.4L0 12.8Z" fill="#1d4f9e"/><text x="0.6" y="10.6" font-family="Liberation Sans, sans-serif" font-size="9" font-weight="700" fill="#fff">W</text></svg>
<div class="b" style="left:390px;top:752px;width:451px;height:6px;background:#d6d6d4;border-radius:3px;"></div>
<div class="b" style="left:386px;top:761px;width:1126px;height:1px;background:#dfe6f2;"></div>
<div class="b" style="left:410px;top:766px;width:100px;height:32px;background:#fefffd;border:1px solid #a9c0dc;border-radius:4px;"></div>
<span class="t" id="all5" style="left:422.80px;top:774.65px;font-size:14px;color:#3a4354;letter-spacing:0.112px;">All 5</span>
<svg style="position:absolute;left:488.5px;top:780.5px" width="8" height="5" viewBox="0 0 8 5" fill="none" ><path d="M0 0H7.6L3.8 4.4Z" fill="#111"/></svg>
<div class="b" style="left:520px;top:766px;width:100px;height:32px;background:#fefffd;border:1px solid #0b73e0;border-radius:0 0 4px 4px;"></div>
<div class="b" style="left:588px;top:767px;width:31px;height:30px;background:#d9eefa;border-radius:0 0 3px 0;"></div>
<span class="t" id="edit" style="left:537.20px;top:775.15px;font-size:14px;color:#1273e4;letter-spacing:-0.207px;">Edit</span>
<svg style="position:absolute;left:597px;top:777px" width="14" height="9" viewBox="0 0 14 9" fill="none" ><path d="M0.9 7.8L7 1.7L13.1 7.8" stroke="#0b6fe0" stroke-width="1.9"/></svg>
<svg style="position:absolute;left:636px;top:774px" width="16" height="16" viewBox="0 0 16 16" fill="none" ><path d="M6.5 10.8H0.6V0.6H9V5" stroke="#1273e4" stroke-width="1.1"/><path d="M2.2 3H4.3M2.2 5.4H4.3M2.2 7.8H4.3M6 3H7.5" stroke="#1273e4" stroke-width="1"/><circle cx="10" cy="10" r="3.3" stroke="#1273e4" stroke-width="1.1"/><path d="M12.4 12.4L15 15" stroke="#1273e4" stroke-width="1.1"/></svg>
<span class="t" id="save" style="left:663.20px;top:774.65px;font-size:14px;color:#1273e4;letter-spacing:-0.175px;">Save search</span>
<span class="t" id="tot" style="left:1437.20px;top:773.85px;font-size:14px;color:#3a4a66;letter-spacing:0.169px;">Total: 5</span>
<span class="t" id="wm1" style="left:1234.90px;top:717.67px;font-size:20px;color:#c3c3c3;letter-spacing:-0.046px;">Activate Windows</span>
<span class="t" id="wm2" style="left:1234.90px;top:743.30px;font-size:15px;color:#c9c9c9;letter-spacing:-0.014px;">Go to Settings to activate Windows.</span>
<div class="b" style="left:520px;top:381px;width:206px;height:386px;background:#fefffd;border:1px solid #0b73e0;border-radius:4px 4px 0 0;"></div>
<span class="t" id="m0" style="left:530.80px;top:389.95px;font-size:14px;color:#1a72e4;letter-spacing:-0.082px;">Edit</span>
<span class="t" id="m1" style="left:530.80px;top:421.95px;font-size:14px;color:#1a72e4;letter-spacing:0.116px;">Move</span>
<span class="t" id="m2" style="left:530.80px;top:453.95px;font-size:14px;color:#1a72e4;letter-spacing:-0.096px;">Delete</span>
<span class="t" id="m3" style="left:530.80px;top:485.95px;font-size:14px;color:#1a72e4;letter-spacing:-0.153px;">Replace</span>
<span class="t" id="m4" style="left:530.80px;top:517.95px;font-size:14px;color:#1a72e4;letter-spacing:0.143px;">Tally/Sum/Average</span>
<span class="t" id="m5" style="left:530.80px;top:549.95px;font-size:14px;color:#1a72e4;letter-spacing:-0.013px;">Export to File</span>
<span class="t" id="m6" style="left:530.80px;top:581.95px;font-size:14px;color:#1a72e4;letter-spacing:0.036px;">Cluster</span>
<span class="t" id="m7" style="left:530.80px;top:613.95px;font-size:14px;color:#1a72e4;letter-spacing:-0.122px;">Save as List</span>
<span class="t" id="m8" style="left:530.80px;top:645.95px;font-size:14px;color:#1a72e4;letter-spacing:-0.018px;">Convert</span>
<span class="t" id="m9" style="left:530.80px;top:677.95px;font-size:14px;color:#1a72e4;letter-spacing:-0.216px;">Re-produce</span>
<span class="t" id="m10" style="left:530.80px;top:709.95px;font-size:14px;color:#1a72e4;letter-spacing:0.077px;">Image</span>
<span class="t" id="m11" style="left:530.80px;top:741.95px;font-size:14px;color:#1a72e4;letter-spacing:-0.102px;">Language Weaver Translation</span>
</body></html>
